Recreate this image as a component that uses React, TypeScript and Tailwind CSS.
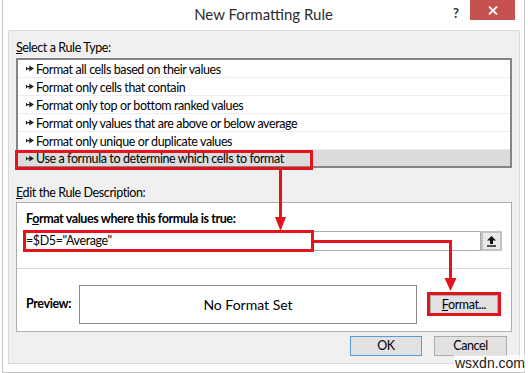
import React from "react";

function RowArrow() {
  return (
    <svg width="8" height="7" viewBox="0 0 8 7" className="shrink-0">
      <rect x="0" y="3" width="4" height="1.3" fill="#222" />
      <rect x="0" y="2" width="1" height="3.2" fill="#222" />
      <polygon points="3.3,0.6 8,3.6 3.3,6.6" fill="#222" />
    </svg>
  );
}

const rules = [
  "Format all cells based on their values",
  "Format only cells that contain",
  "Format only top or bottom ranked values",
  "Format only values that are above or below average",
  "Format only unique or duplicate values",
];

export default function App() {
  const red = "#e3141b";
  return (
    <div className="relative w-[528px] h-[373px] bg-white overflow-hidden font-['Lato','Noto_Sans',sans-serif] text-[12.5px] tracking-[-0.4px] text-black">
      <div className="pl-[2px] pr-[3px]">
        <div className="h-[373px] border-x border-b border-[#c6c6c6] flex flex-col">
          {/* Title bar */}
          <div className="relative h-[30px] flex items-center justify-center shrink-0">
            <span className="text-[15px] tracking-normal text-[#2b2b2b] leading-none -mt-[1px]">New Formatting Rule</span>
            <span className="absolute left-[450px] top-[4px] text-[13px] font-bold text-[#333]">?</span>
            <div className="absolute left-[467px] top-0 w-[45px] h-[20px] bg-[#c75050] flex items-center justify-center">
              <svg width="10" height="9" viewBox="0 0 10 9">
                <path d="M1 0.5 L9 8.5 M9 0.5 L1 8.5" stroke="white" strokeWidth="1.8" />
              </svg>
            </div>
          </div>
          {/* Content panel */}
          <div className="ml-[5px] mr-[4px] h-[334px] border border-[#dadada] bg-[#f0f0f0] px-[7px] flex flex-col shrink-0">
            <div className="mt-[9px] h-[16px] leading-[16px]">
              <span className="underline">S</span>elect a Rule Type:
            </div>
            <div className="mt-[2px] h-[110px] border-2 border-[#858585] bg-white flex flex-col">
              {rules.map((r) => (
                <div key={r} className="h-[18px] border-b border-[#ececec] flex items-center pl-[8px] gap-[2px] leading-none">
                  <RowArrow />
                  <span className="mt-[3px]">{r}</span>
                </div>
              ))}
              <div className="h-[16px] bg-[#dcdcdc] flex items-center pl-[8px] gap-[2px] leading-none">
                <RowArrow />
                <span className="mt-[3px]">Use a formula to determine which cells to format</span>
              </div>
            </div>
            <div className="mt-[17px] h-[16px] leading-[16px]">
              <span className="underline">E</span>dit the Rule Description:
            </div>
            <div className="mt-[1px] border border-[#acacac] bg-white flex flex-col">
              <div className="pl-[9px] mt-[8px] h-[16px] leading-[16px] font-bold">
                F<span className="underline">o</span>rmat values where this formula is true:
              </div>
              <div className="pl-[7px] mt-[4px] flex">
                <div className="w-[457px] h-[20px] border border-[#ababab] flex items-center pl-[1px] leading-none">
                  <span className="mt-[1px]">=$D5="Average"</span>
                </div>
                <div className="w-[21px] h-[20px] border-2 border-[#c3c3c3] bg-[#e9e9e9] flex items-center justify-center">
                  <svg width="9" height="11" viewBox="0 0 9 11">
                    <polygon points="4.5,0 9,4.5 6,4.5 6,8 3,8 3,4.5 0,4.5" fill="#111" />
                    <rect x="0" y="9.3" width="9" height="1.4" fill="#111" />
                  </svg>
                </div>
              </div>
              <div className="mt-[17px] h-[1px] bg-[#d7d7d7] mr-[1px]" />
              <div className="mt-[16px] mb-[7px] flex items-center pl-[9px]">
                <div className="w-[53px] font-bold">Preview:</div>
                <div className="w-[338px] h-[39px] border border-[#8a8a8a] flex items-center justify-center text-[14px] tracking-normal">
                  No Format Set
                </div>
                <div className="ml-[13px] w-[68px] h-[20px] border border-[#adadad] bg-[#e1e1e1] flex items-center justify-center leading-none">
                  <span className="mt-[1px]"><span className="underline">F</span>ormat...</span>
                </div>
              </div>
            </div>
            <div className="mt-[4px] mr-[5px] flex justify-end gap-[12px]">
              <div className="w-[72px] h-[20px] border border-[#5a9bd5] bg-[#e1e1e1] flex items-center justify-center leading-none">
                <span className="mt-[1px]">OK</span>
              </div>
              <div className="w-[73px] h-[20px] border border-[#adadad] bg-[#e1e1e1] flex items-center justify-center leading-none">
                <span className="mt-[1px]">Cancel</span>
              </div>
            </div>
          </div>
        </div>
      </div>

      {/* Annotation overlay */}
      <svg className="absolute inset-0 pointer-events-none" width="528" height="373" viewBox="0 0 528 373">
        <rect x="16.5" y="151.5" width="295" height="17" fill="none" stroke={red} strokeWidth="3" />
        <rect x="279" y="170" width="3" height="49" fill={red} />
        <polygon points="275,217 286,217 280.5,231" fill={red} />
        <rect x="24.5" y="231.5" width="288" height="19" fill="none" stroke={red} strokeWidth="3" />
        <rect x="314" y="240" width="138" height="3" fill={red} />
        <rect x="449" y="240" width="3" height="40" fill={red} />
        <polygon points="444.5,278 456.5,278 450.5,291" fill={red} />
        <rect x="428.5" y="293.5" width="71" height="21" fill="none" stroke={red} strokeWidth="3" />
      </svg>

      <div className="absolute left-[454px] top-[355px] px-[1px] bg-white/70 text-[14px] tracking-normal leading-[16px] text-[#1a1a1a] font-['Liberation_Sans',sans-serif]">
        wsxdn.com
      </div>
    </div>
  );
}
